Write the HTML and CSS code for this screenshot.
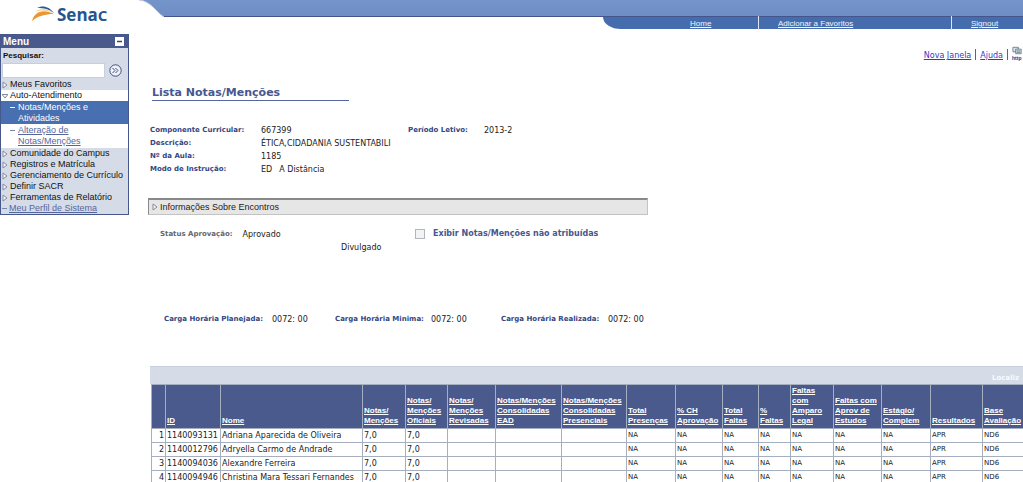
FILE: index.html
```html
<!DOCTYPE html>
<html lang="pt-BR">
<head>
<meta charset="utf-8">
<title>Lista Notas/Menções</title>
<link rel="stylesheet" href="styles.css">
</head>
<body>
<header class="header">
  <svg class="logo" viewBox="0 0 139 30" role="img" aria-label="Senac">
    <path d="M37 8C42 5 49 6 54 13C49 9 44 8 37 8Z" fill="#2c5996"/>
    <path d="M32 21C34 13 42 8 54 14C45 14 38 16 32 21Z" fill="#ea9632"/>
    <path d="M35 12C41 7 48 9 53 13C46 10 41 10 35 12Z" fill="#f9cf8a"/>
    <text class="logo-text" x="57" y="21">Sena<tspan>C</tspan></text>
  </svg>
  <div class="banner">
    <div class="banner-top">
      <svg class="curve" viewBox="0 0 25 17"><path d="M0 0C12 1 17 12 25 17H0Z" fill="#fff"/><path d="M0 0C12 1 17 12 25 17" fill="none" stroke="#c5c9d8"/></svg>
    </div>
    <nav class="nav">
      <a class="nav-home" href="#">Home</a>
      <a class="nav-add" href="#">Adicionar a Favoritos</a>
      <a class="nav-out" href="#">Signout</a>
    </nav>
  </div>
</header>
<div class="page">
  <aside class="menu">
    <div class="menu-title">Menu
      <button class="collapse" type="button" aria-label="Recolher menu"><svg viewBox="0 0 9 9"><path d="M2 4.500H7" stroke="#33436f" stroke-width="1.500"/></svg></button>
    </div>
    <form class="search">
      <label for="q">Pesquisar:</label>
      <div class="search-row">
        <input id="q" type="text">
        <button class="go" type="button" aria-label="Pesquisar"><svg viewBox="0 0 13 13" fill="none" stroke="#3e5080"><circle cx="6.500" cy="6.500" r="5.700" fill="#eef1f8"/><path d="M3.500 4L6 6.500L3.500 9M6.500 4L9 6.500L6.500 9"/></svg></button>
      </div>
    </form>
    <ul class="items">
      <li><svg class="arrow" viewBox="0 0 6 8"><path d="M1 1L5 4L1 7Z"/></svg>Meus Favoritos</li>
      <li class="open"><svg class="arrow" viewBox="0 0 6 8"><path d="M0 2.500H6L3 6Z"/></svg>Auto-Atendimento</li>
      <li class="sub selected"><span class="dash"></span><a href="#">Notas/Menções e Atividades</a></li>
      <li class="sub open last"><span class="dash"></span><a href="#">Alteração de Notas/Menções</a></li>
      <li><svg class="arrow" viewBox="0 0 6 8"><path d="M1 1L5 4L1 7Z"/></svg>Comunidade do Campus</li>
      <li><svg class="arrow" viewBox="0 0 6 8"><path d="M1 1L5 4L1 7Z"/></svg>Registros e Matrícula</li>
      <li><svg class="arrow" viewBox="0 0 6 8"><path d="M1 1L5 4L1 7Z"/></svg>Gerenciamento de Currículo</li>
      <li><svg class="arrow" viewBox="0 0 6 8"><path d="M1 1L5 4L1 7Z"/></svg>Definir SACR</li>
      <li><svg class="arrow" viewBox="0 0 6 8"><path d="M1 1L5 4L1 7Z"/></svg>Ferramentas de Relatório</li>
      <li><span class="dash"></span><a href="#">Meu Perfil de Sistema</a></li>
    </ul>
  </aside>
  <main class="content">
    <div class="tools">
      <a href="#">Nova Janela</a><a href="#">Ajuda</a>
      <a class="http" href="#"><svg viewBox="0 0 12 9" fill="#dce6ea" stroke="#6c7f8d"><path d="M1 1H7V6H1Z"/><path d="M4 3H10V8H4Z"/><path d="M5 5H9M5 6.500H9"/></svg>http</a>
    </div>
    <h1>Lista Notas/Menções</h1>
    <dl class="facts">
      <dt>Componente Curricular:</dt><dd>667399</dd><dt>Período Letivo:</dt><dd>2013-2</dd>
      <dt>Descrição:</dt><dd class="wide">ÉTICA,CIDADANIA SUSTENTABILI</dd>
      <dt>Nº da Aula:</dt><dd class="wide">1185</dd>
      <dt>Modo de Instrução:</dt><dd class="wide mode"><span>ED</span><span>A Distância</span></dd>
    </dl>
    <button class="section" type="button"><svg class="arrow" viewBox="0 0 6 8"><path d="M1 1L5 4L1 7Z"/></svg>Informações Sobre Encontros</button>
    <div class="status">
      <div class="approval"><b>Status Aprovação:</b><span>Aprovado</span></div>
      <div class="show"><input id="show" type="checkbox"><label for="show">Exibir Notas/Menções não atribuídas</label></div>
      <div class="released">Divulgado</div>
    </div>
    <div class="hours">
      <b>Carga Horária Planejada:</b><span>0072: 00</span>
      <b>Carga Horária Minima:</b><span>0072: 00</span>
      <b>Carga Horária Realizada:</b><span>0072: 00</span>
    </div>
    <div class="grid">
      <div class="grid-bar"><span>Localiz</span></div>
      <table>
        <colgroup><col class="w14"><col class="w55"><col class="w142"><col class="w43"><col class="w42"><col class="w48"><col class="w66"><col class="w65"><col class="w49"><col class="w47"><col class="w36"><col class="w32"><col class="w43"><col class="w48"><col class="w49"><col class="w52"><col class="w41"></colgroup>
        <thead><tr>
          <th></th><th><a href="#">ID</a></th><th><a href="#">Nome</a></th><th><a href="#">Notas/<br>Menções</a></th><th><a href="#">Notas/<br>Menções<br>Oficiais</a></th><th><a href="#">Notas/<br>Menções<br>Revisadas</a></th><th><a href="#">Notas/Menções<br>Consolidadas<br>EAD</a></th><th><a href="#">Notas/Menções<br>Consolidadas<br>Presenciais</a></th><th><a href="#">Total<br>Presenças</a></th><th><a href="#">% CH<br>Aprovação</a></th><th><a href="#">Total<br>Faltas</a></th><th><a href="#">%<br>Faltas</a></th><th><a href="#">Faltas<br>com<br>Amparo<br>Legal</a></th><th><a href="#">Faltas com<br>Aprov de<br>Estudos</a></th><th><a href="#">Estágio/<br>Complem</a></th><th><a href="#">Resultados</a></th><th><a href="#">Base<br>Avaliação</a></th>
        </tr></thead>
        <tbody>
          <tr><td>1</td><td>1140093131</td><td>Adriana Aparecida de Oliveira</td><td>7,0</td><td>7,0</td><td></td><td></td><td></td><td>NA</td><td>NA</td><td>NA</td><td>NA</td><td>NA</td><td>NA</td><td>NA</td><td>APR</td><td>ND6</td></tr>
          <tr><td>2</td><td>1140012796</td><td>Adryella Carmo de Andrade</td><td>7,0</td><td>7,0</td><td></td><td></td><td></td><td>NA</td><td>NA</td><td>NA</td><td>NA</td><td>NA</td><td>NA</td><td>NA</td><td>APR</td><td>ND6</td></tr>
          <tr><td>3</td><td>1140094036</td><td>Alexandre Ferreira</td><td>7,0</td><td>7,0</td><td></td><td></td><td></td><td>NA</td><td>NA</td><td>NA</td><td>NA</td><td>NA</td><td>NA</td><td>NA</td><td>APR</td><td>ND6</td></tr>
          <tr><td>4</td><td>1140094946</td><td>Christina Mara Tessari Fernandes</td><td>7,0</td><td>7,0</td><td></td><td></td><td></td><td>NA</td><td>NA</td><td>NA</td><td>NA</td><td>NA</td><td>NA</td><td>NA</td><td>APR</td><td>ND6</td></tr>
        </tbody>
      </table>
    </div>
  </main>
</div>
</body>
</html>
```

FILE: styles.css
```css
* { box-sizing: border-box; }
html { height: 100vh; overflow: hidden; }
body { margin: 0; background: #fff; color: #222; font: 8px/13px "DejaVu Sans", Verdana, sans-serif; }
button { border: 0; padding: 0; background: none; font: inherit; color: inherit; }
svg { display: block; }

.header { display: flex; height: 34px; }
.logo { width: 139px; height: 30px; flex: none; }
.logo-text { font: bold 17px "Open Sans", "Noto Sans", sans-serif; fill: #24558f; }
.logo-text tspan { font-size: 15px; }
.banner { flex: 1; }
.banner-top { height: 17px; background: linear-gradient(#7495cb, #6e8cc5); border-bottom: 1px solid #45558c; }
.curve { width: 25px; height: 17px; }
.nav { display: flex; align-items: center; height: 12px; margin-left: 464px; padding-left: 87px; background: #456dad; border-bottom-left-radius: 18px 12px; font: 8px/12px "Liberation Sans", Arial, sans-serif; }
.nav a { padding-top: 2px; color: #f2f5fc; }
.nav-home { width: 68px; }
.nav-add { width: 193px; padding-left: 19px; border-left: 1px solid #dfe6f4; }
.nav-out { padding-left: 19px; border-left: 1px solid #dfe6f4; }

.page { display: flex; align-items: flex-start; }
.menu { width: 129px; flex: none; border: 1px solid #46578c; background: #d5dce8; color: #111; font: 9px/11px "Liberation Sans", Arial, sans-serif; }
.menu-title { display: flex; align-items: center; justify-content: space-between; height: 13px; padding: 0 4px 0 2px; background: #49598c; color: #fff; font-weight: bold; font-size: 10px; }
.collapse { width: 9px; height: 9px; background: #fff; }
.search { padding: 1px 1px 1px; }
.search label { display: block; padding: 1px 0 2px 1px; font-size: 8px; font-weight: bold; }
.search-row { display: flex; align-items: center; gap: 4px; }
.search-row input { width: 103px; height: 15px; border: 1px solid #c5cfdf; border-radius: 0; padding: 0; background: #fff; }
.go { width: 13px; height: 13px; }
.items { margin: 0; padding: 0; list-style: none; }
.items li { display: flex; align-items: flex-start; gap: 2px; padding-left: 1px; white-space: nowrap; }
.items a { color: #55669c; }
.items .open { background: #fff; }
.items .sub { gap: 3px; padding-left: 9px; white-space: normal; }
.items .sub a { width: 80px; }
.items .selected { padding-top: 1px; background: #4870b0; color: #fff; }
.items .selected a { color: #fff; text-decoration: none; }
.items .last { padding: 1px 0 1px 9px; }
.arrow { width: 6px; height: 8px; flex: none; align-self: center; fill: #f4f6fa; stroke: #858ba0; }
.dash { width: 5px; height: 1px; flex: none; margin-top: 5px; background: #7a86ab; }
.selected .dash { background: #fff; }

.content { flex: 1; min-width: 0; padding-left: 19px; overflow: hidden; }
.tools { display: flex; justify-content: flex-end; height: 51px; padding-top: 15px; white-space: nowrap; }
.tools a { height: 11px; padding-right: 4px; margin-right: 4px; border-right: 1px solid #735f54; color: #3737c4; line-height: 13px; }
.tools .http { display: block; width: 11px; height: 15px; margin: -3px 0 0; padding: 0; border: 0; color: #29298c; font: bold 5px/6px "Liberation Sans", Arial, sans-serif; text-decoration: none; }
.http svg { width: 11px; height: 9px; }
h1 { width: 197px; margin: 0 0 23px 4px; border-bottom: 1px solid #56669e; color: #47578f; font-size: 11px; line-height: 15px; }
.facts { display: grid; grid-template-columns: 111px 147px 76px 1fr; margin: 0 0 22px 2px; }
dt, b { color: #34467f; font-weight: bold; font-size: 7px; }
dd { margin: 0; }
.facts .wide { grid-column: span 3; }
.mode { display: flex; gap: 7px; }
.section { display: flex; align-items: center; gap: 2px; width: 500px; height: 17px; padding-left: 3px; border: 1px solid #c3c3c3; border-top: 2px solid #898989; border-left-color: #898989; background: #e6e6e6; color: #222; font: 9px "Liberation Sans", Arial, sans-serif; }
.status { display: grid; grid-template-columns: 181px 74px 1fr; padding: 11px 0 0 12px; }
.approval { grid-column: span 2; display: flex; gap: 10px; padding-top: 2px; }
.approval b { color: #66666c; }
.show { display: flex; align-items: center; gap: 8px; }
.show label { color: #47578f; font-weight: bold; }
.show input { appearance: none; width: 10px; height: 10px; margin: 0; border: 1px solid #b3b5ba; background: #f2f3f4; }
.released { grid-column: 2; }
.hours { display: grid; grid-template-columns: 108px 63px 96px 70px 107px 1fr; margin: 59px 0 40px 16px; white-space: nowrap; }
.grid { margin-left: 2px; overflow: hidden; }
.grid-bar { height: 18px; padding-top: 5px; border-top: 1px solid #c7d0dc; background: #d5dce8; }
.grid-bar span { display: block; width: 31px; margin-left: auto; color: #f8faff; font-weight: bold; font-size: 7px; }
table { width: 872px; margin-left: 1px; table-layout: fixed; border-collapse: collapse; border: 1px solid #a6afc0; }
th, td { padding: 0 1px; border: 1px solid #a6afc0; text-align: left; white-space: nowrap; }
th { height: 44px; background: #4a5a8c; color: #fff; vertical-align: bottom; font: bold 8px/10px "Liberation Sans", Arial, sans-serif; }
th a { color: #fff; }
th:nth-child(n+2) { padding-bottom: 2px; }
td { height: 14px; line-height: 13px; }
td:first-child { text-align: right; }
td:nth-child(n+9) { font-size: 7px; }
.w14 { width: 14px; } .w55 { width: 55px; } .w142 { width: 142px; } .w43 { width: 43px; }
.w42 { width: 42px; } .w48 { width: 48px; } .w66 { width: 66px; } .w65 { width: 65px; }
.w49 { width: 49px; } .w47 { width: 47px; } .w36 { width: 36px; } .w32 { width: 32px; }
.w52 { width: 52px; } .w41 { width: 41px; }
```
